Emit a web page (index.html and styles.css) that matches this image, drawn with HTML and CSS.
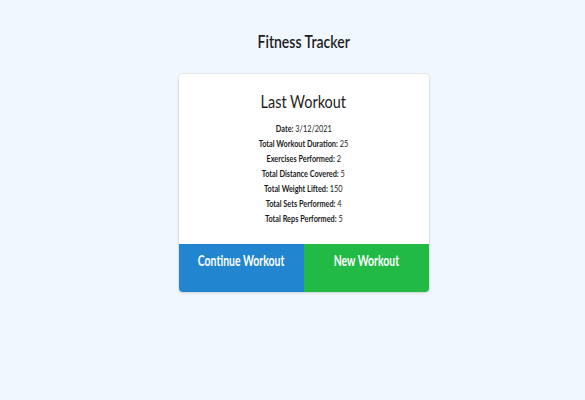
FILE: index.html
```html
<!DOCTYPE html>
<html>
<head>
<meta charset="utf-8">
<link rel="stylesheet" href="styles.css">
</head>
<body>
<div class="page">
  <h1 class="title"><span class="sq">Fitness Tracker</span></h1>
  <div class="card">
    <div class="card-body">
      <h2 class="card-title"><span class="sq">Last Workout</span></h2>
      <ul class="stats">
        <li><span class="sq"><b>Date:</b> 3/12/2021</span></li>
        <li><span class="sq"><b>Total Workout Duration:</b> 25</span></li>
        <li><span class="sq"><b>Exercises Performed:</b> 2</span></li>
        <li><span class="sq"><b>Total Distance Covered:</b> 5</span></li>
        <li><span class="sq"><b>Total Weight Lifted:</b> 150</span></li>
        <li><span class="sq"><b>Total Sets Performed:</b> 4</span></li>
        <li><span class="sq"><b>Total Reps Performed:</b> 5</span></li>
      </ul>
    </div>
    <div class="actions">
      <button class="btn btn-blue"><span class="sq">Continue Workout</span></button>
      <button class="btn btn-green"><span class="sq">New Workout</span></button>
    </div>
  </div>
</div>
</body>
</html>
```
FILE: styles.css
```css
html, body { margin: 0; padding: 0; }
body {
  background: #f0f7ff;
  font-family: Lato, "Noto Sans", sans-serif;
  color: #1b1c1d;
  width: 585px;
  height: 400px;
  overflow: hidden;
}
.page {
  display: flex;
  flex-direction: column;
  align-items: center;
  padding-top: 31px;
  padding-left: 22px;
}
.sq { display: inline-block; white-space: nowrap; }
.title {
  margin: 0;
  font-size: 17.5px;
  font-weight: 600;
  line-height: 21px;
}
.title .sq { transform: scaleX(0.8); }
.card {
  margin-top: 22px;
  width: 250px;
  background: #fff;
  border-radius: 4px;
  box-shadow: 0 1px 3px 0 #d4d4d5, 0 0 0 1px #e6e9ee;
  overflow: hidden;
}
.card-body {
  padding: 17px 10px 18px;
  text-align: center;
}
.card-title {
  margin: 0 0 7.5px;
  font-size: 17px;
  font-weight: 400;
  line-height: 22px;
}
.card-title .sq { transform: scaleX(0.85); }
.stats {
  list-style: none;
  margin: 0;
  padding: 0;
  font-size: 9.4px;
  line-height: 15px;
}
.stats .sq { transform: scaleX(0.78); }
.actions {
  display: flex;
}
.btn {
  flex: 1;
  border: 0;
  margin: 0;
  height: 48px;
  padding: 7px 0 0;
  display: flex;
  justify-content: center;
  align-items: flex-start;
  color: #fff;
  font-family: Lato, sans-serif;
  font-weight: 700;
  font-size: 14.5px;
  line-height: 20px;
}
.btn .sq { transform: scaleX(0.72); }
.btn-blue { background: #2185d0; }
.btn-green { background: #21ba45; }
```
